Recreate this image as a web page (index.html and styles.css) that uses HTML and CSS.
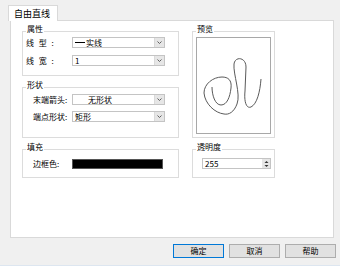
FILE: index.html
```html
<!DOCTYPE html>
<html>
<head>
<meta charset="utf-8">
<link rel="stylesheet" href="styles.css">
</head>
<body>
<div class="window">
  <div class="tab">自由直线</div>
  <div class="panel">
    <div class="grid">
      <div class="group g-attr">
        <div class="gtitle">属性</div>
        <div class="row r1 attr-row">
          <span class="lbl wide">线 型 :</span>
          <div class="combo"><span class="val"><span class="dash"></span>实线</span><span class="arrow"><svg width="7" height="7" viewBox="0 0 7 7"><polyline points="1.5,2.5 3.5,4.5 5.5,2.5" fill="none" stroke="#606060" stroke-width="1"/></svg></span></div>
        </div>
        <div class="row r2 attr-row">
          <span class="lbl wide">线 宽 :</span>
          <div class="combo"><span class="val">1</span><span class="arrow"><svg width="7" height="7" viewBox="0 0 7 7"><polyline points="1.5,2.5 3.5,4.5 5.5,2.5" fill="none" stroke="#606060" stroke-width="1"/></svg></span></div>
        </div>
      </div>

      <div class="group g-preview">
        <div class="gtitle">预览</div>
        <div class="preview">
          <svg width="73" height="95" viewBox="198 38 73 95">
            <path d="M262 79 C261 92 258 104 252 107 C247 109 245 101 246 91 L247 67 C247 57 236 56 235 64 C234 74 242 94 238 104 C235 112 230 115 225 114 C216 113 206 104 205 93 C205 84 214 77 223 77 C229 77 233 80 232 88 C231 97 228 105 222 105 C216 105 213 95 213 87" fill="none" stroke="#5a5a5a" stroke-width="1"/>
          </svg>
        </div>
      </div>

      <div class="group g-shape">
        <div class="gtitle">形状</div>
        <div class="row r1 shape-row">
          <span class="lbl">末端箭头:</span>
          <div class="combo"><span class="val center">无形状</span><span class="arrow"><svg width="7" height="7" viewBox="0 0 7 7"><polyline points="1.5,2.5 3.5,4.5 5.5,2.5" fill="none" stroke="#606060" stroke-width="1"/></svg></span></div>
        </div>
        <div class="row r2 shape-row">
          <span class="lbl">端点形状:</span>
          <div class="combo"><span class="val">矩形</span><span class="arrow"><svg width="7" height="7" viewBox="0 0 7 7"><polyline points="1.5,2.5 3.5,4.5 5.5,2.5" fill="none" stroke="#606060" stroke-width="1"/></svg></span></div>
        </div>
      </div>

      <div class="group g-fill">
        <div class="gtitle">填充</div>
        <div class="row fill-row">
          <span class="lbl">边框色:</span>
          <div class="swatch"></div>
        </div>
      </div>

      <div class="group g-alpha">
        <div class="gtitle">透明度</div>
        <div class="spin">
          <span class="val">255</span>
          <span class="spinbtns">
            <svg width="7" height="10" viewBox="0 0 7 10"><polygon points="1.5,4 3.5,2 5.5,4" fill="#333"/><polygon points="1.5,6 3.5,8 5.5,6" fill="#333"/></svg>
          </span>
        </div>
      </div>
    </div>
  </div>
  <div class="buttons">
    <div class="btn default">确定</div>
    <div class="btn">取消</div>
    <div class="btn">帮助</div>
  </div>
</div>
</body>
</html>
```

FILE: styles.css
```css
html, body {
  margin: 0;
  padding: 0;
}
body {
  width: 340px;
  height: 266px;
  background: #f0f0f0;
  font-family: "Noto Sans CJK SC", "Liberation Sans", sans-serif;
  font-size: 8px;
  color: #000;
  overflow: hidden;
  box-sizing: border-box;
  border-bottom: 1px solid #dde6f0;
}
.window {
  padding: 5px 0 0 8px;
}
.tab {
  position: relative;
  z-index: 1;
  box-sizing: border-box;
  width: 50px;
  height: 16px;
  margin-bottom: -1px;
  border: 1px solid #d9d9d9;
  border-bottom: none;
  background: #fff;
  font-size: 9px;
  line-height: 15px;
  padding-left: 5px;
}
.panel {
  box-sizing: border-box;
  margin-left: 2px;
  width: 324px;
  height: 218px;
  border: 1px solid #d9d9d9;
  background: #fff;
  padding: 10px 0 0 11px;
}
.grid {
  display: grid;
  grid-template-columns: 157px 83px;
  grid-template-rows: 45px 51px 29px;
  column-gap: 13px;
  row-gap: 11px;
}
.group {
  box-sizing: border-box;
  border: 1px solid #dcdcdc;
}
.g-attr { grid-column: 1; grid-row: 1; }
.g-shape { grid-column: 1; grid-row: 2; }
.g-fill { grid-column: 1; grid-row: 3; }
.g-preview { grid-column: 2; grid-row: 1 / span 2; }
.g-alpha { grid-column: 2; grid-row: 3; }
.gtitle {
  display: table;
  margin: -8px 0 0 3px;
  padding: 0 1px;
  background: #fff;
  line-height: 9px;
  height: 9px;
}
.row {
  display: flex;
  align-items: center;
  height: 11px;
}
.attr-row { padding-left: 3px; }
.attr-row .lbl { width: 46px; }
.attr-row.r1 { margin-top: 4px; }
.attr-row.r2 { margin-top: 7px; }
.shape-row { padding-left: 10px; }
.shape-row .lbl { width: 39px; }
.shape-row.r1 { margin-top: 5px; }
.shape-row.r2 { margin-top: 6px; }
.lbl {
  white-space: pre;
  line-height: 11px;
}
.lbl.wide { word-spacing: 3px; }
.combo {
  box-sizing: border-box;
  width: 93px;
  height: 11px;
  border: 1px solid #c4c4c4;
  background: #fff;
  display: flex;
  align-items: center;
}
.combo .val {
  flex: 1;
  padding-left: 2px;
  line-height: 9px;
  display: flex;
  align-items: center;
}
.combo .val.center { padding-left: 15px; }
.dash {
  display: inline-block;
  width: 10px;
  height: 0;
  border-top: 1px solid #000;
  margin-right: 1px;
}
.arrow {
  width: 9px;
  height: 9px;
  background: #e6e6e6;
  border-left: 1px solid #dadada;
  display: flex;
  align-items: center;
  justify-content: center;
}
.fill-row {
  padding-left: 10px;
  margin-top: 7px;
}
.fill-row .lbl { width: 39px; }
.swatch {
  box-sizing: border-box;
  width: 91px;
  height: 10px;
  background: #000;
  border: 1px solid #555;
}
.preview {
  box-sizing: border-box;
  width: 75px;
  height: 97px;
  margin: 4px 0 0 3px;
  border: 1px solid #a8a8a8;
  background: #fff;
}
.preview svg { display: block; }
.spin {
  box-sizing: border-box;
  width: 69px;
  height: 11px;
  margin: 7px 0 0 9px;
  border: 1px solid #c4c4c4;
  display: flex;
  align-items: center;
}
.spin .val {
  flex: 1;
  padding-left: 2px;
  line-height: 9px;
}
.spinbtns {
  width: 8px;
  height: 9px;
  background: #e6e6e6;
  display: flex;
  align-items: center;
  justify-content: center;
}
.buttons {
  display: flex;
  justify-content: flex-end;
  gap: 5px;
  margin-top: 6px;
  padding-right: 4px;
}
.btn {
  box-sizing: border-box;
  width: 51px;
  height: 14px;
  border: 1px solid #adadad;
  background: #e1e1e1;
  text-align: center;
  line-height: 12px;
}
.btn.default {
  border-color: #0078d7;
}
```
